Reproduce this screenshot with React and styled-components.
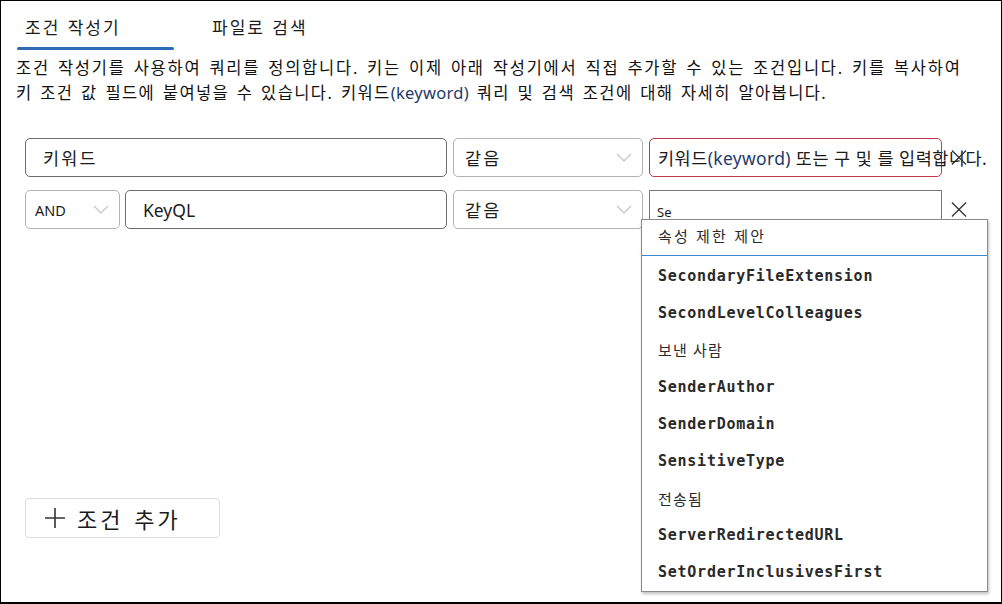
import React from "react";
import styled, { createGlobalStyle } from "styled-components";

const GlobalStyle = createGlobalStyle`
  html, body {
    margin: 0;
    padding: 0;
    background: #fff;
  }
  body {
    font-family: "Noto Sans", "Noto Sans CJK KR", sans-serif;
    color: #1b1b1b;
  }
  * {
    box-sizing: border-box;
  }
`;

const Frame = styled.div`
  width: 1002px;
  height: 604px;
  border: 1px solid #000;
  border-bottom-width: 2px;
  display: flex;
  flex-direction: column;
  position: relative;
  overflow: hidden;
`;

const TabBar = styled.div`
  display: flex;
  padding: 15px 0 0 16px;
`;

const Tab = styled.div`
  position: relative;
  font-size: 17px;
  letter-spacing: 2px;
  word-spacing: 1px;
  line-height: 24px;
  padding: 0 8px 10px;
  width: ${(p) => (p.$active ? "157px" : "auto")};
  margin-left: ${(p) => (p.$active ? "0" : "30px")};
  color: #1b1b1b;

  &::after {
    content: "";
    display: ${(p) => (p.$active ? "block" : "none")};
    position: absolute;
    left: 0;
    right: 0;
    bottom: 0;
    height: 3px;
    border-radius: 2px;
    background: #2f6cb3;
  }
`;

const Description = styled.div`
  margin: 6px 0 0;
  padding-left: 15px;
  font-size: 16.5px;
  line-height: 24.5px;
  word-spacing: 2px;
  color: #111;
  white-space: nowrap;
`;

const DescLine = styled.div`
  letter-spacing: ${(p) => p.$ls}px;
`;

const Keyword = styled.span`
  color: #1f3a68;
  letter-spacing: 0.3px;
`;

const Conditions = styled.div`
  display: flex;
  flex-direction: column;
  gap: 13px;
  margin-top: 33px;
  padding-left: 24px;
`;

const Row = styled.div`
  display: flex;
  align-items: center;
  height: 39px;
`;

const Field = styled.div`
  height: 39px;
  width: ${(p) => p.$w}px;
  margin-right: ${(p) => p.$gap ?? 6}px;
  border: 1px solid ${(p) => p.$border || "#6d6d6d"};
  border-radius: ${(p) => p.$radius ?? 5}px;
  display: flex;
  align-items: center;
  padding-left: ${(p) => p.$pad ?? 17}px;
  font-size: ${(p) => p.$size ?? 17.5}px;
  letter-spacing: ${(p) => p.$ls ?? 2.2}px;
  color: #1b1b1b;
  position: relative;
  white-space: nowrap;
`;

const Select = styled(Field)`
  justify-content: space-between;
  padding-right: 10px;
`;

const Chevron = () => (
  <svg width="16" height="9" viewBox="0 0 16 9" fill="none">
    <path d="M1 1l7 7 7-7" stroke="#c4c4c4" strokeWidth="1.2" />
  </svg>
);

const RemoveButton = styled.div`
  width: 16px;
  height: 16px;
  margin-left: 9px;
  display: flex;
  align-items: center;
  justify-content: center;
  position: relative;
  z-index: 2;
`;

const CloseIcon = () => (
  <svg width="17" height="17" viewBox="0 0 17 17">
    <path d="M1 1l15 15M16 1L1 16" stroke="#333" strokeWidth="1.4" />
  </svg>
);

const Overflow = styled.span`
  position: relative;
  z-index: 1;
  letter-spacing: 0.5px;
`;

const SmallValue = styled.span`
  font-size: 13px;
  letter-spacing: 0;
  margin-top: 4px;
`;

const SuggestionMenu = styled.div`
  position: absolute;
  left: -9px;
  top: 28px;
  width: 347px;
  height: 373px;
  background: #fff;
  border: 1px solid #8a8a8a;
  box-shadow: 1px 2px 3px rgba(0, 0, 0, 0.25);
  z-index: 3;
  display: flex;
  flex-direction: column;
`;

const MenuHeader = styled.div`
  height: 37px;
  padding: 0 0 4px 16px;
  display: flex;
  align-items: center;
  font-size: 15px;
  letter-spacing: 2.2px;
  color: #2b2b2b;
  border-bottom: 1px solid #3a86d0;
`;

const MenuList = styled.div`
  display: flex;
  flex-direction: column;
  padding-top: 1px;
`;

const MenuItem = styled.div`
  height: 37.1px;
  display: flex;
  align-items: center;
  padding-left: 16px;
  font-family: ${(p) =>
    p.$mono ? '"DejaVu Sans Mono", monospace' : '"Noto Sans", "Noto Sans CJK KR", sans-serif'};
  font-size: 15px;
  font-weight: ${(p) => (p.$mono ? 700 : 400)};
  letter-spacing: ${(p) => (p.$mono ? "0.75px" : "1.2px")};
  color: #2a2a2a;
`;

const Footer = styled.div`
  margin-top: auto;
  padding: 0 0 64px 24px;
`;

const AddButton = styled.button`
  width: 195px;
  height: 40px;
  border: 1px solid #dcdcdc;
  border-radius: 4px;
  background: #fff;
  display: flex;
  align-items: center;
  padding: 0 0 0 18px;
  gap: 11px;
  font-family: "Noto Sans", "Noto Sans CJK KR", sans-serif;
  font-size: 22px;
  letter-spacing: 3px;
  word-spacing: 2px;
  color: #1b1b1b;
`;

const PlusIcon = () => (
  <svg width="22" height="22" viewBox="0 0 22 22">
    <path d="M11 1v20M1 11h20" stroke="#333" strokeWidth="1.6" />
  </svg>
);

const suggestions = [
  { label: "SecondaryFileExtension", mono: true },
  { label: "SecondLevelColleagues", mono: true },
  { label: "보낸 사람", mono: false },
  { label: "SenderAuthor", mono: true },
  { label: "SenderDomain", mono: true },
  { label: "SensitiveType", mono: true },
  { label: "전송됨", mono: false },
  { label: "ServerRedirectedURL", mono: true },
  { label: "SetOrderInclusivesFirst", mono: true },
];

export default function App() {
  return (
    <>
      <GlobalStyle />
      <Frame>
        <TabBar>
          <Tab $active>조건 작성기</Tab>
          <Tab>파일로 검색</Tab>
        </TabBar>

        <Description>
          <DescLine $ls={1.75}>
            조건 작성기를 사용하여 쿼리를 정의합니다. 키는 이제 아래 작성기에서 직접 추가할 수 있는 조건입니다. 키를 복사하여
          </DescLine>
          <DescLine $ls={1.4}>
            키 조건 값 필드에 붙여넣을 수 있습니다. 키워드<Keyword>(keyword)</Keyword> 쿼리 및 검색 조건에 대해 자세히 알아봅니다.
          </DescLine>
        </Description>

        <Conditions>
          <Row>
            <Field $w={422}>키워드</Field>
            <Select $w={190} $border="#b3b3b3" $pad={11}>
              같음
              <Chevron />
            </Select>
            <Field $w={293} $gap={0} $border="#c4394a" $pad={8}>
              <Overflow>
                키워드<Keyword>(keyword)</Keyword> 또는 구 및 를 입력합니다.
              </Overflow>
            </Field>
            <RemoveButton>
              <CloseIcon />
            </RemoveButton>
          </Row>
          <Row>
            <Select $w={95} $gap={5} $border="#b3b3b3" $pad={9} $size={14.5} $ls={0}>
              AND
              <Chevron />
            </Select>
            <Field $w={322} $ls={0}>KeyQL</Field>
            <Select $w={190} $border="#b3b3b3" $pad={11}>
              같음
              <Chevron />
            </Select>
            <Field $w={293} $gap={0} $border="#767676" $radius={0} $pad={7}>
              <SmallValue>Se</SmallValue>
              <SuggestionMenu>
                <MenuHeader>속성 제한 제안</MenuHeader>
                <MenuList>
                  {suggestions.map((s) => (
                    <MenuItem key={s.label} $mono={s.mono}>
                      {s.label}
                    </MenuItem>
                  ))}
                </MenuList>
              </SuggestionMenu>
            </Field>
            <RemoveButton>
              <CloseIcon />
            </RemoveButton>
          </Row>
        </Conditions>

        <Footer>
          <AddButton>
            <PlusIcon />
            조건 추가
          </AddButton>
        </Footer>
      </Frame>
    </>
  );
}
